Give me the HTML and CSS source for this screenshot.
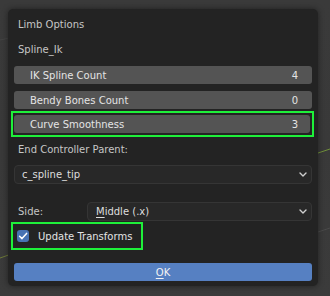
FILE: index.html
```html
<!DOCTYPE html>
<html>
<head>
<meta charset="utf-8">
<link rel="stylesheet" href="styles.css">
</head>
<body>
<svg class="viewport" width="330" height="296" viewBox="0 0 330 296">
  <path d="M0 258 L40 244" stroke="#7a8a3a" stroke-width="1" fill="none" opacity="0.8"/>
  <path d="M318 153 L330 149" stroke="#6f8f3a" stroke-width="1" fill="none"/>
  <path d="M318 232 L330 228" stroke="#4a4a4a" stroke-width="1" fill="none"/>
  <path d="M0 40 C20 36 40 30 60 28" stroke="#444" stroke-width="1" fill="none"/>
</svg>
<div class="panel">
  <div class="label title">Limb Options</div>
  <div class="label sub">Spline_Ik</div>
  <div class="field first"><span>IK Spline Count</span><span>4</span></div>
  <div class="field"><span>Bendy Bones Count</span><span>0</span></div>
  <div class="hl-field">
    <div class="field inner"><span>Curve Smoothness</span><span>3</span></div>
  </div>
  <div class="label parent">End Controller Parent:</div>
  <div class="dropdown full"><span>c_spline_tip</span>
    <svg class="chev" width="8" height="5" viewBox="0 0 8 5"><path d="M1 1 L4 4 L7 1" stroke="#cfcfcf" stroke-width="1.4" fill="none" stroke-linecap="round" stroke-linejoin="round"/></svg>
  </div>
  <div class="side-row">
    <div class="label side">Side:</div>
    <div class="dropdown grow"><span><u>M</u>iddle (.x)</span>
      <svg class="chev" width="8" height="5" viewBox="0 0 8 5"><path d="M1 1 L4 4 L7 1" stroke="#cfcfcf" stroke-width="1.4" fill="none" stroke-linecap="round" stroke-linejoin="round"/></svg>
    </div>
  </div>
  <div class="hl-check">
    <div class="checkbox">
      <svg width="12" height="12" viewBox="0 0 12 12"><path d="M2.6 6.2 L5 8.6 L9.6 3.4" stroke="#ffffff" stroke-width="1.5" fill="none" stroke-linecap="round" stroke-linejoin="round"/></svg>
    </div>
    <span class="check-text">Update Transforms</span>
  </div>
  <div class="ok"><span><u>O</u>K</span></div>
</div>
</body>
</html>
```
FILE: styles.css
```css
html, body {
  margin: 0;
  padding: 0;
}
body {
  width: 330px;
  height: 296px;
  background: linear-gradient(180deg, #3a3a3a 0%, #393939 50%, #3b3b3b 100%);
  font-family: "DejaVu Sans", sans-serif;
  font-size: 10px;
  overflow: hidden;
  position: relative;
  padding-top: 9px;
  padding-left: 8px;
  box-sizing: border-box;
}
.viewport {
  position: absolute;
  left: 0;
  top: 0;
}
.panel {
  position: relative;
  width: 310px;
  height: 277px;
  box-sizing: border-box;
  background: #232323;
  border-radius: 5px;
  box-shadow: 0 0 6px rgba(0,0,0,0.45);
  padding: 7px 6px 5px 6px;
  display: flex;
  flex-direction: column;
}
.label {
  color: #c6c6c6;
  height: 18px;
  line-height: 18px;
  padding-left: 4px;
  white-space: nowrap;
}
.sub { margin-top: 7px; }
.field {
  height: 18px;
  border-radius: 3px;
  background: #545454;
  color: #e4e4e4;
  display: flex;
  justify-content: space-between;
  align-items: center;
  padding: 0 14px 0 16px;
  margin-top: 7px;
  box-sizing: border-box;
}
.hl-field {
  margin-top: 2px;
  margin-left: -3px;
  width: 303px;
  height: 26px;
  border: 2px solid #1ef03a;
  box-sizing: border-box;
  padding: 2px 2px 2px 1px;
}
.field.inner {
  margin-top: 0;
  padding-right: 12px;
}
.parent { margin-top: 4px; }
.dropdown {
  height: 19px;
  border-radius: 4px;
  background: #282828;
  border: 1px solid #353535;
  box-sizing: border-box;
  color: #dedede;
  display: flex;
  align-items: center;
  justify-content: space-between;
  padding: 0 4px 0 7px;
}
.dropdown.full { margin-top: 6px; }
.side-row {
  margin-top: 18px;
  display: flex;
  align-items: center;
  height: 19px;
}
.side {
  width: 69px;
  flex: none;
}
.dropdown.grow {
  flex: 1;
  padding-left: 8px;
}
.chev { flex: none; }
u {
  text-decoration: underline;
  text-underline-offset: 2px;
}
.hl-check {
  margin-top: 1px;
  margin-left: -3px;
  width: 132px;
  height: 28px;
  border: 2px solid #1ef03a;
  box-sizing: border-box;
  display: flex;
  align-items: center;
  padding-left: 4px;
}
.checkbox {
  width: 12px;
  height: 12px;
  border-radius: 3px;
  background: #4772b3;
  display: flex;
  flex: none;
}
.check-text {
  margin-left: 9px;
  color: #e4e4e4;
  white-space: nowrap;
}
.ok {
  margin-top: 13px;
  height: 18px;
  border-radius: 3px;
  background: #5680c2;
  color: #f2f2f2;
  display: flex;
  align-items: center;
  justify-content: center;
}
```
